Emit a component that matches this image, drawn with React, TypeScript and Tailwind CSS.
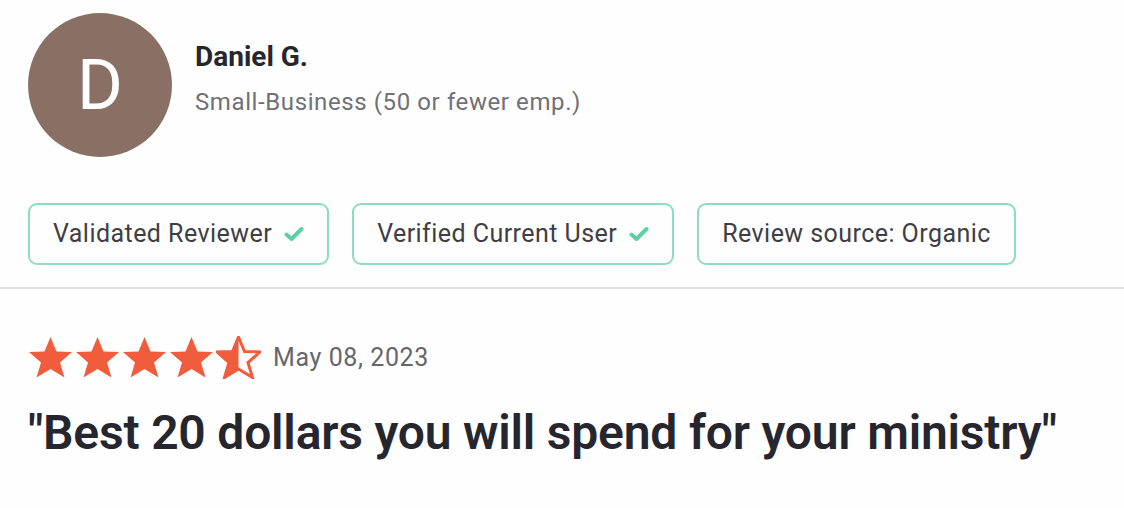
const font = { fontFamily: "Roboto, 'Liberation Sans', sans-serif" };

const Check = () => (
  <svg width="20" height="16" viewBox="0 0 20 16" className="shrink-0">
    <path d="M2.5 8.5 L7.5 13 L17.5 3" fill="none" stroke="#5fcfa5" strokeWidth="4" strokeLinecap="round" strokeLinejoin="round" />
  </svg>
);

const STAR = "22.5,1 28.5,15.5 44,16 32,26.5 36.5,41.5 22.5,33 8.5,41.5 13,26.5 1,16 16.5,15.5";

const Star = ({ half = false }: { half?: boolean }) => (
  <svg width="45" height="43" viewBox="0 0 45 43" className="shrink-0">
    {half ? (
      <>
        <defs>
          <clipPath id="lefthalf">
            <rect x="0" y="0" width="22.5" height="43" />
          </clipPath>
        </defs>
        <polygon points={STAR} fill="#f05c3c" clipPath="url(#lefthalf)" />
        <polygon points={STAR} fill="none" stroke="#f05c3c" strokeWidth="3" strokeLinejoin="miter" />
      </>
    ) : (
      <polygon points={STAR} fill="#f05c3c" />
    )}
  </svg>
);

const Badge = ({ label, check }: { label: string; check?: boolean }) => (
  <div className="flex items-center gap-[12px] h-[62px] px-[23px] border-2 border-[#8edcc0] rounded-[9px] text-[25px] tracking-[0.45px] text-[#3e3e44]">
    <span>{label}</span>
    {check && <Check />}
  </div>
);

export default function App() {
  return (
    <div className="w-[1124px] h-[508px] bg-[#fefefe] overflow-hidden" style={font}>
      <div className="pl-[28px] pt-[13px]">
        <div className="flex items-start gap-[23px]">
          <div className="w-[144px] h-[144px] rounded-full bg-[#8a7064] flex items-center justify-center text-white text-[70px] leading-none">
            D
          </div>
          <div className="pt-[27px]">
            <div className="text-[28px] font-bold text-[#26262e] leading-[34px]">Daniel G.</div>
            <div className="mt-[13px] text-[24px] tracking-[0.6px] text-[#707076] leading-[30px]">Small-Business (50 or fewer emp.)</div>
          </div>
        </div>
        <div className="flex gap-[23px] mt-[46px]">
          <Badge label="Validated Reviewer" check />
          <Badge label="Verified Current User" check />
          <Badge label="Review source: Organic" />
        </div>
      </div>
      <div className="h-[2px] bg-[#dedede] mt-[22px]" />
      <div className="pl-[28px] pt-[47px]">
        <div className="flex items-center">
          <div className="flex gap-[2px]">
            <Star />
            <Star />
            <Star />
            <Star />
            <Star half />
          </div>
          <span className="ml-[12px] text-[25px] tracking-[0.6px] text-[#66666c]">May 08, 2023</span>
        </div>
        <div className="mt-[26px] text-[48px] font-semibold text-[#26262e] leading-[56px] tracking-[-0.2px]">
          "Best 20 dollars you will spend for your ministry"
        </div>
      </div>
    </div>
  );
}
